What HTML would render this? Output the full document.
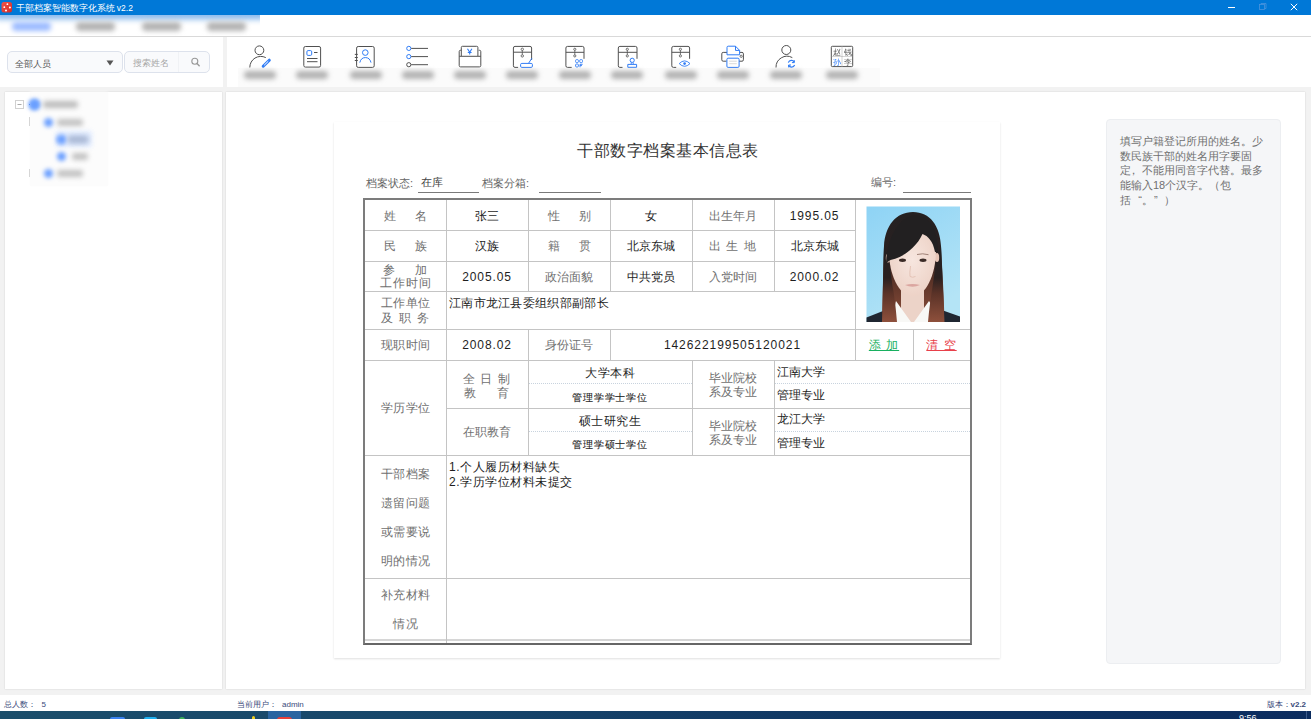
<!DOCTYPE html>
<html><head><meta charset="utf-8"><style>
*{box-sizing:border-box;margin:0;padding:0}
html,body{width:1311px;height:719px;overflow:hidden;background:#f2f2f2;font-family:"Liberation Sans",sans-serif;color:#333}
.a{position:absolute}
.c{position:absolute;padding-top:2px;display:flex;align-items:center;justify-content:center;text-align:center;white-space:nowrap}
.lb{color:#707070;font-size:12px;line-height:15px}
.vl{color:#1e1e1e;font-size:12px;line-height:15px}
.hl{position:absolute;height:1px;background:#c4c4c4}
.vln{position:absolute;width:1px;background:#c4c4c4}
.dot{position:absolute;height:1px;background-image:linear-gradient(90deg,#c8d3de 50%,transparent 50%);background-size:2px 1px}
.blur{filter:blur(2px)}
</style></head><body>
<div class="a" style="left:0px;top:0px;width:1311px;height:15px;background:#0078d7"></div>
<div class="a" style="left:0px;top:15px;width:1311px;height:21px;background:#fff"></div>
<div class="a" style="left:0px;top:36px;width:1311px;height:1px;background:#d9d9d9"></div>
<div class="a" style="left:0px;top:37px;width:223px;height:50px;background:#fff"></div>
<div class="a" style="left:227px;top:37px;width:1084px;height:50px;background:#fff"></div>
<div class="a" style="left:5px;top:92px;width:217px;height:597px;background:#fff;box-shadow:0 0 1.5px rgba(0,0,0,.16)"></div>
<div class="a" style="left:226px;top:92px;width:1079px;height:597px;background:#fff;box-shadow:0 0 1.5px rgba(0,0,0,.16)"></div>
<div class="a" style="left:0px;top:695px;width:1311px;height:16px;background:#fff"></div>
<div class="a" style="left:0px;top:711px;width:1311px;height:8px;background:linear-gradient(90deg,#1b4e6b 0%,#17476b 30%,#0f3563 70%,#0b2c5f 100%)"></div>
<svg class="a" style="left:0;top:0" width="1311" height="90" viewBox="0 0 1311 90">
<defs>
<linearGradient id="appg" x1="0" y1="0" x2="1" y2="1"><stop offset="0" stop-color="#f0544a"/><stop offset="1" stop-color="#d42a26"/></linearGradient>
</defs>
<rect x="1.5" y="2" width="10.5" height="10.5" rx="2.5" fill="url(#appg)"/>
<circle cx="7.4" cy="4.2" r="0.9" fill="#fff"/><circle cx="9.9" cy="7.4" r="1" fill="#fff"/><circle cx="4.3" cy="7.2" r="0.9" fill="#fff"/><circle cx="6" cy="10.4" r="1" fill="#fff"/>
<line x1="1228" y1="7.5" x2="1235" y2="7.5" stroke="#fff" stroke-width="1"/>
<rect x="1259.5" y="4.5" width="5" height="5" fill="none" stroke="#4a94de" stroke-width="0.8"/>
<path d="M1261 4.5V3.5h5v5h-1.5" fill="none" stroke="#4a94de" stroke-width="0.8"/>
<path d="M1290.8 3.8L1297.2 10.2M1297.2 3.8L1290.8 10.2" stroke="#fff" stroke-width="1"/>
</svg>
<div class="a " style="left:15.5px;top:1.8px;white-space:nowrap;font-size:8.5px;line-height:12px;color:#fff">干部档案智能数字化系统 v2.2</div>
<div class="a" style="left:0;top:15px;width:260px;height:21px;overflow:hidden;background:#fff">
<div class="a" style="left:-5px;top:-5px;width:270px;height:9px;background:#7fb2ea;filter:blur(3px)"></div>
<div class="a" style="left:12px;top:7px;width:39px;height:9px;background:#9dbcff;border-radius:4px;filter:blur(2.8px)"></div>
<div class="a" style="left:76px;top:7px;width:39px;height:9px;background:#b4b4b4;border-radius:4px;filter:blur(2.8px)"></div>
<div class="a" style="left:142px;top:7px;width:39px;height:9px;background:#b4b4b4;border-radius:4px;filter:blur(2.8px)"></div>
<div class="a" style="left:207px;top:7px;width:39px;height:9px;background:#b4b4b4;border-radius:4px;filter:blur(2.8px)"></div>
</div>
<div class="a" style="left:7px;top:51px;width:116px;height:22px;background:#f9fafc;border:1px solid #dde2ec;border-radius:5px"></div>
<div class="a " style="left:15px;top:56.5px;white-space:nowrap;font-size:9px;line-height:14px;color:#555">全部人员</div>
<svg class="a" style="left:105px;top:59px" width="10" height="8"><path d="M1.5 1.5H8.5L5 6.5Z" fill="#555"/></svg>
<div class="a" style="left:124px;top:51px;width:86px;height:22px;background:#f9fafc;border:1px solid #dde2ec;border-radius:5px"></div>
<div class="a" style="left:178px;top:52px;width:1px;height:20px;background:#f0f2f5"></div>
<div class="a " style="left:133px;top:56px;white-space:nowrap;font-size:8.6px;line-height:14px;color:#a8a8a8">搜索姓名</div>
<svg class="a" style="left:188px;top:55px" width="16" height="14"><circle cx="6.8" cy="6.3" r="3" fill="none" stroke="#999" stroke-width="1.1"/><path d="M9 8.6L11.2 10.8" stroke="#999" stroke-width="1.4" stroke-linecap="round"/></svg>
<svg class="a" style="left:0;top:0" width="1311" height="90" viewBox="0 0 1311 90" fill="none" stroke-width="1">
<!-- label band -->
<rect x="238" y="68" width="642" height="19" fill="#fbfbfb"/>
<!-- 1 person edit -->
<circle cx="259.4" cy="50.3" r="4.4" stroke="#505050"/>
<path d="M249.8 67.5A11 11 0 0 1 265.8 57.6" stroke="#505050"/>
<path d="M263.2 66.2L269.3 60.2" stroke="#2f7cf6" stroke-width="3" stroke-linecap="round"/>
<path d="M264.2 65.2L268.3 61.2" stroke="#fff" stroke-width="1"/>
<!-- 2 document -->
<rect x="303.8" y="46.5" width="16.8" height="20.6" rx="1.6" stroke="#505050"/>
<rect x="306.9" y="50.6" width="4.8" height="4.8" rx="1.2" stroke="#2f7cf6"/>
<path d="M314 52.5H317.5M307 58.5H317.5M307 61.7H317.5" stroke="#505050"/>
<!-- 3 contact book -->
<rect x="356.6" y="46.5" width="17.6" height="20.9" rx="1.6" stroke="#505050"/>
<path d="M354.8 54.4H357.8M354.8 57.5H357.8M354.8 60.5H357.8" stroke="#505050"/>
<circle cx="365.3" cy="52.6" r="2.8" stroke="#2f7cf6"/>
<path d="M359.8 62.6A5.8 6.8 0 0 1 371 62.6" stroke="#2f7cf6"/>
<!-- 4 list -->
<circle cx="408.8" cy="48.4" r="2.1" stroke="#2f7cf6"/>
<circle cx="408.8" cy="56.6" r="2.1" stroke="#2f7cf6"/>
<circle cx="408.8" cy="64.7" r="2.1" stroke="#505050"/>
<path d="M411.2 48.4H428M411.2 56.6H428M411.2 64.7H428" stroke="#505050"/>
<!-- 5 money box -->
<path d="M461.3 56V47.5a1.2 1.2 0 0 1 1.2-1.2h14.2a1.2 1.2 0 0 1 1.2 1.2V56" stroke="#505050"/>
<path d="M461.3 50.3h-0.8a1.3 1.3 0 0 0-1.3 1.3V65.5a1.4 1.4 0 0 0 1.4 1.4h18.8a1.4 1.4 0 0 0 1.4-1.4V51.6a1.3 1.3 0 0 0-1.3-1.3h-0.8" stroke="#505050"/>
<path d="M459.3 56.3H480.8" stroke="#505050"/>
<path d="M467.5 48.8L469.7 52.2L471.9 48.8M469.7 52.2V54.5M467.8 52.5H471.6" stroke="#2f7cf6" stroke-width="1.1"/>
<!-- 6 archive + pen -->
<path d="M518.1 67.4H515a1.6 1.6 0 0 1-1.6-1.6V48a1.6 1.6 0 0 1 1.6-1.6h15a1.6 1.6 0 0 1 1.6 1.6V60" stroke="#505050"/>
<path d="M513.4 52.2H531.6" stroke="#505050"/>
<circle cx="522.3" cy="49.3" r="1.2" stroke="#505050" stroke-width="0.8"/>
<path d="M522.3 50.5V54.7" stroke="#505050" stroke-width="0.8"/>
<circle cx="522.3" cy="55.9" r="1.2" stroke="#505050" stroke-width="0.8"/>
<rect x="520.6" y="63.4" width="11.8" height="4" rx="1.2" stroke="#2f7cf6"/>
<path d="M528.6 63.2L531.9 58.2" stroke="#2f7cf6"/>

<path d="M571.7 67.4H567.5a1.6 1.6 0 0 1-1.6-1.6V48a1.6 1.6 0 0 1 1.6-1.6H582.4a1.6 1.6 0 0 1 1.6 1.6V58.8" stroke="#505050"/>
<path d="M565.9 52.3H584" stroke="#505050"/>
<circle cx="574.8" cy="49.3" r="1.1" stroke="#505050" stroke-width="0.8"/>
<path d="M574.8 50.4V54.8" stroke="#505050" stroke-width="0.8"/>
<circle cx="574.8" cy="55.9" r="1.1" stroke="#505050" stroke-width="0.8"/>
<rect x="575.6" y="59.6" width="2.8" height="3" rx="1" stroke="#2f7cf6" stroke-width="0.9"/>
<rect x="579.7" y="59.6" width="2.8" height="3" rx="1" stroke="#2f7cf6" stroke-width="0.9"/>
<rect x="575.6" y="64" width="2.8" height="3" rx="1" stroke="#2f7cf6" stroke-width="0.9"/>
<path d="M580 67.3V64.3H582.6M580 65.6H582" stroke="#2f7cf6" stroke-width="0.9"/>
<path d="M622.5 67.4H619.9a1.6 1.6 0 0 1-1.6-1.6V48a1.6 1.6 0 0 1 1.6-1.6H635.4a1.6 1.6 0 0 1 1.6 1.6V58.8" stroke="#505050"/>
<path d="M618.3 52.3H637" stroke="#505050"/>
<circle cx="627.3" cy="49.3" r="1.1" stroke="#505050" stroke-width="0.8"/>
<path d="M627.3 50.4V54.8" stroke="#505050" stroke-width="0.8"/>
<circle cx="627.3" cy="55.9" r="1.1" stroke="#505050" stroke-width="0.8"/>
<circle cx="632.2" cy="60.3" r="2.1" stroke="#2f7cf6"/>
<path d="M631.2 62.4V64.2M633.2 62.4V64.2" stroke="#2f7cf6" stroke-width="0.9"/>
<path d="M627.8 64.4H636.6V67.3H627.8Z" stroke="#2f7cf6"/>
<path d="M676.2 67.4H673.4a1.6 1.6 0 0 1-1.6-1.6V48a1.6 1.6 0 0 1 1.6-1.6H688.0a1.6 1.6 0 0 1 1.6 1.6V58.8" stroke="#505050"/>
<path d="M671.8 52.3H689.6" stroke="#505050"/>
<circle cx="680.4" cy="49.3" r="1.1" stroke="#505050" stroke-width="0.8"/>
<path d="M680.4 50.4V54.8" stroke="#505050" stroke-width="0.8"/>
<circle cx="680.4" cy="55.9" r="1.1" stroke="#505050" stroke-width="0.8"/>
<path d="M679.2 63.6Q684.6 58.2 690 63.6Q684.6 69 679.2 63.6Z" stroke="#2f7cf6" stroke-width="0.9"/>
<circle cx="684.6" cy="63.6" r="1.3" fill="#2f7cf6" stroke="none"/>

<!-- 10 printer -->
<path d="M726.5 61.2H723.2a1.4 1.4 0 0 1-1.4-1.4V53.8a1.4 1.4 0 0 1 1.4-1.4H742a1.4 1.4 0 0 1 1.4 1.4V59.8a1.4 1.4 0 0 1-1.4 1.4H739" stroke="#505050"/>
<circle cx="741.2" cy="56.3" r="1.1" stroke="#505050" stroke-width="0.8"/>
<path d="M727 54.8V47.4a1.2 1.2 0 0 1 1.2-1.2H735.5L739.6 50.4V54.8Z" fill="#fff" stroke="#2f7cf6"/>
<path d="M735.5 46.2V50.4H739.6" stroke="#2f7cf6"/>
<rect x="726.9" y="58.2" width="12.2" height="9.2" rx="1.2" fill="#fff" stroke="#2f7cf6"/>
<path d="M729.2 61.2H736.8M729.2 63.7H736.8" stroke="#c8c8c8" stroke-width="0.7"/>
<!-- 11 person refresh -->
<circle cx="786.3" cy="50" r="4.5" stroke="#505050"/>
<path d="M776 67.5A11 11 0 0 1 792.3 57.6" stroke="#505050"/>
<path d="M788.3 62.6A3.3 3.3 0 0 1 794.3 62.2M794.6 65A3.3 3.3 0 0 1 788.6 65.4" stroke="#2f7cf6" stroke-width="1.2"/>
<path d="M794.3 60.2V62.6H791.9M788.6 67.4V65H791" stroke="#2f7cf6" stroke-width="1"/>
<!-- 12 grid -->
<rect x="831.3" y="46.3" width="21.4" height="20.3" rx="1" stroke="#505050"/>
<path d="M842 46.5V66.5" stroke="#c8c8c8" stroke-width="0.8"/><path d="M831.5 56.5H852.5" stroke="#888" stroke-width="0.7" stroke-dasharray="1 1"/>
</svg>
<div class="a" style="left:833px;top:47.6px;width:32px;height:32px;font-size:32px;line-height:32px;color:#555;transform:scale(0.25);transform-origin:0 0">赵</div>
<div class="a" style="left:843.6px;top:47.6px;width:32px;height:32px;font-size:32px;line-height:32px;color:#555;transform:scale(0.25);transform-origin:0 0">钱</div>
<div class="a" style="left:833px;top:57.6px;width:32px;height:32px;font-size:32px;line-height:32px;color:#2f7cf6;transform:scale(0.25);transform-origin:0 0">孙</div>
<div class="a" style="left:843.6px;top:57.6px;width:32px;height:32px;font-size:32px;line-height:32px;color:#555;transform:scale(0.25);transform-origin:0 0">李</div>
<div class="a" style="left:243.5px;top:71px;width:32px;height:8px;background:#b2b2b2;border-radius:4px;filter:blur(2.8px)"></div>
<div class="a" style="left:296px;top:71px;width:32px;height:8px;background:#b2b2b2;border-radius:4px;filter:blur(2.8px)"></div>
<div class="a" style="left:349.5px;top:71px;width:32px;height:8px;background:#b2b2b2;border-radius:4px;filter:blur(2.8px)"></div>
<div class="a" style="left:401.5px;top:71px;width:32px;height:8px;background:#b2b2b2;border-radius:4px;filter:blur(2.8px)"></div>
<div class="a" style="left:454px;top:71px;width:32px;height:8px;background:#b2b2b2;border-radius:4px;filter:blur(2.8px)"></div>
<div class="a" style="left:506px;top:71px;width:32px;height:8px;background:#b2b2b2;border-radius:4px;filter:blur(2.8px)"></div>
<div class="a" style="left:558.8px;top:71px;width:32px;height:8px;background:#b2b2b2;border-radius:4px;filter:blur(2.8px)"></div>
<div class="a" style="left:611.3px;top:71px;width:32px;height:8px;background:#b2b2b2;border-radius:4px;filter:blur(2.8px)"></div>
<div class="a" style="left:664.5px;top:71px;width:32px;height:8px;background:#b2b2b2;border-radius:4px;filter:blur(2.8px)"></div>
<div class="a" style="left:716.5px;top:71px;width:32px;height:8px;background:#b2b2b2;border-radius:4px;filter:blur(2.8px)"></div>
<div class="a" style="left:770px;top:71px;width:32px;height:8px;background:#b2b2b2;border-radius:4px;filter:blur(2.8px)"></div>
<div class="a" style="left:826px;top:71px;width:32px;height:8px;background:#b2b2b2;border-radius:4px;filter:blur(2.8px)"></div>
<div class="a" style="left:30px;top:92px;width:78px;height:94px;background:#fcfcfc;box-shadow:0 0 3px #fcfcfc"></div>
<svg class="a" style="left:15px;top:100px" width="10" height="10"><rect x="0.5" y="0.5" width="8" height="8" fill="#fff" stroke="#d0d0d0"/><path d="M2.5 4.5H6.5" stroke="#aaa"/></svg>
<div class="a" style="left:29px;top:117px;width:1px;height:9px;border-left:1px solid #d6d6d6"></div>
<div class="a" style="left:29px;top:169px;width:1px;height:8px;border-left:1px solid #d6d6d6"></div>
<div class="a" style="left:29px;top:104px;width:1px;height:1px;background:#2a6ef0"></div>
<div class="a" style="left:29px;top:99px;width:11px;height:11px;border-radius:50%;background:#6aa2ff;filter:blur(2px)"></div>
<div class="a" style="left:30.0px;top:100.0px;width:9px;height:9px;border-radius:50%;background:#6b9fff;filter:blur(2px)"></div>
<div class="a" style="left:43px;top:101.0px;width:35px;height:7px;border-radius:3px;background:#bcbcbc;filter:blur(2.8px)"></div>
<div class="a" style="left:43.5px;top:118.0px;width:9px;height:9px;border-radius:50%;background:#6b9fff;filter:blur(2px)"></div>
<div class="a" style="left:57px;top:119.0px;width:26px;height:7px;border-radius:3px;background:#c2c2c2;filter:blur(2.8px)"></div>
<div class="a" style="left:56.5px;top:135.0px;width:9px;height:9px;border-radius:50%;background:#6b9fff;filter:blur(2px)"></div>
<div class="a" style="left:68px;top:136.0px;width:20px;height:7px;border-radius:3px;background:#aab8d4;filter:blur(2.8px)"></div>
<div class="a" style="left:56.5px;top:152.0px;width:9px;height:9px;border-radius:50%;background:#6b9fff;filter:blur(2px)"></div>
<div class="a" style="left:72px;top:153.0px;width:16px;height:7px;border-radius:3px;background:#c2c2c2;filter:blur(2.8px)"></div>
<div class="a" style="left:43.5px;top:168.5px;width:9px;height:9px;border-radius:50%;background:#6b9fff;filter:blur(2px)"></div>
<div class="a" style="left:57px;top:169.5px;width:26px;height:7px;border-radius:3px;background:#c2c2c2;filter:blur(2.8px)"></div>
<div class="a" style="left:56px;top:131px;width:36px;height:16px;background:#dbe8ff;filter:blur(2.5px);opacity:.8"></div>
<div class="a" style="left:56.5px;top:135.0px;width:9px;height:9px;border-radius:50%;background:#6b9fff;filter:blur(2px)"></div>
<div class="a" style="left:68px;top:136.0px;width:20px;height:7px;border-radius:3px;background:#aab8d4;filter:blur(2.8px)"></div>
<div class="a" style="left:334px;top:122px;width:666px;height:536px;background:#fff;box-shadow:0 1px 2px rgba(0,0,0,.13)"></div>
<div class="a " style="left:577px;top:141px;white-space:nowrap;font-size:16px;line-height:20px;color:#333;letter-spacing:0.5px">干部数字档案基本信息表</div>
<div class="a " style="left:366px;top:176px;white-space:nowrap;font-size:11px;line-height:14px;color:#666">档案状态:</div>
<div class="a " style="left:421px;top:175px;white-space:nowrap;font-size:11px;line-height:14px;color:#444">在库</div>
<div class="hl" style="left:418px;top:192px;width:61px;height:1px;background:#7a7a7a"></div>
<div class="a " style="left:482px;top:176px;white-space:nowrap;font-size:11px;line-height:14px;color:#666">档案分箱:</div>
<div class="hl" style="left:539px;top:192px;width:62px;height:1px;background:#7a7a7a"></div>
<div class="a " style="left:871px;top:175px;white-space:nowrap;font-size:11px;line-height:14px;color:#666">编号:</div>
<div class="hl" style="left:903px;top:192px;width:68px;height:1px;background:#7a7a7a"></div>
<div class="a" style="left:363px;top:198px;width:609px;height:447px;border:2px solid #7c7c7c;border-bottom-color:#666"></div>
<div class="hl" style="left:365px;top:230px;width:490px;height:1px"></div>
<div class="hl" style="left:365px;top:261px;width:490px;height:1px"></div>
<div class="hl" style="left:365px;top:291px;width:490px;height:1px"></div>
<div class="hl" style="left:365px;top:329px;width:605px;height:1px"></div>
<div class="hl" style="left:365px;top:360px;width:605px;height:1px"></div>
<div class="hl" style="left:446px;top:408px;width:524px;height:1px"></div>
<div class="hl" style="left:365px;top:455px;width:605px;height:1px"></div>
<div class="hl" style="left:365px;top:578px;width:605px;height:1px"></div>
<div class="hl" style="left:365px;top:639px;width:605px;height:2px;background:#d6d6d6"></div>
<div class="vln" style="left:528px;top:200px;height:91px;width:1px"></div>
<div class="vln" style="left:610px;top:200px;height:91px;width:1px"></div>
<div class="vln" style="left:692px;top:200px;height:91px;width:1px"></div>
<div class="vln" style="left:774px;top:200px;height:91px;width:1px"></div>
<div class="vln" style="left:446px;top:200px;height:443px;width:1px"></div>
<div class="vln" style="left:855px;top:200px;height:160px;width:1px"></div>
<div class="vln" style="left:528px;top:329px;height:126px;width:1px"></div>
<div class="vln" style="left:610px;top:329px;height:31px;width:1px"></div>
<div class="vln" style="left:913px;top:329px;height:31px;width:1px"></div>
<div class="vln" style="left:692px;top:360px;height:95px;width:1px"></div>
<div class="vln" style="left:774px;top:360px;height:95px;width:1px"></div>
<div class="dot" style="left:529px;top:383px;width:163px"></div>
<div class="dot" style="left:529px;top:431px;width:163px"></div>
<div class="dot" style="left:775px;top:383px;width:195px"></div>
<div class="dot" style="left:775px;top:431px;width:195px"></div>
<div class="c lb" style="left:365px;top:200px;width:81px;height:30px;">姓<span style='display:inline-block;width:19px'></span>名</div>
<div class="c vl" style="left:446px;top:200px;width:82px;height:30px;">张三</div>
<div class="c lb" style="left:528px;top:200px;width:82px;height:30px;">性<span style='display:inline-block;width:19px'></span>别</div>
<div class="c vl" style="left:610px;top:200px;width:82px;height:30px;">女</div>
<div class="c lb" style="left:692px;top:200px;width:82px;height:30px;letter-spacing:0.25px">出生年月</div>
<div class="c vl" style="left:774px;top:200px;width:81px;height:30px;letter-spacing:0.9px">1995.05</div>
<div class="c lb" style="left:365px;top:230px;width:81px;height:31px;">民<span style='display:inline-block;width:19px'></span>族</div>
<div class="c vl" style="left:446px;top:230px;width:82px;height:31px;">汉族</div>
<div class="c lb" style="left:528px;top:230px;width:82px;height:31px;">籍<span style='display:inline-block;width:19px'></span>贯</div>
<div class="c vl" style="left:610px;top:230px;width:82px;height:31px;">北京东城</div>
<div class="c lb" style="left:692px;top:230px;width:82px;height:31px;letter-spacing:1px">出 生 地</div>
<div class="c vl" style="left:774px;top:230px;width:81px;height:31px;">北京东城</div>
<div class="c lb" style="left:365px;top:261px;width:81px;height:30px;letter-spacing:1px;line-height:13px"><div>参<span style='display:inline-block;width:19px'></span>加<br>工作时间</div></div>
<div class="c vl" style="left:446px;top:261px;width:82px;height:30px;letter-spacing:0.9px">2005.05</div>
<div class="c lb" style="left:528px;top:261px;width:82px;height:30px;letter-spacing:0.25px">政治面貌</div>
<div class="c vl" style="left:610px;top:261px;width:82px;height:30px;">中共党员</div>
<div class="c lb" style="left:692px;top:261px;width:82px;height:30px;letter-spacing:0.25px">入党时间</div>
<div class="c vl" style="left:774px;top:261px;width:81px;height:30px;letter-spacing:0.9px">2000.02</div>
<div class="c lb" style="left:365px;top:291px;width:81px;height:38px;letter-spacing:0.25px;line-height:15px"><div>工作单位<br><span style='letter-spacing:1.2px'>及 职 务</span></div></div>
<div class="a vl" style="left:449px;top:296px;white-space:nowrap;letter-spacing:0.3px">江南市龙江县委组织部副部长</div>
<div class="c lb" style="left:365px;top:329px;width:81px;height:31px;letter-spacing:0.25px">现职时间</div>
<div class="c vl" style="left:446px;top:329px;width:82px;height:31px;letter-spacing:0.9px">2008.02</div>
<div class="c lb" style="left:528px;top:329px;width:82px;height:31px;letter-spacing:0.25px">身份证号</div>
<div class="c vl" style="left:610px;top:329px;width:245px;height:31px;letter-spacing:0.95px">142622199505120021</div>
<div class="c lb" style="left:855px;top:329px;width:58px;height:31px;color:#18b060;letter-spacing:1px"><u>添 加</u></div>
<div class="c lb" style="left:913px;top:329px;width:57px;height:31px;color:#e8404a;letter-spacing:1px"><u>清 空</u></div>
<div class="c lb" style="left:365px;top:360px;width:81px;height:95px;letter-spacing:0.25px">学历学位</div>
<div class="c lb" style="left:446px;top:360px;width:82px;height:48px;letter-spacing:1px;line-height:14px"><div style='padding-top:1px'>全 日 制<br>教<span style='display:inline-block;width:20px'></span>育</div></div>
<div class="c vl" style="left:528px;top:360px;width:164px;height:23px;letter-spacing:0.5px;padding-top:3.5px">大学本科</div>
<div class="c vl" style="left:528px;top:384px;width:164px;height:24px;font-size:10px;letter-spacing:0.8px;-webkit-text-stroke:0.1px #1e1e1e">管理学学士学位</div>
<div class="c lb" style="left:692px;top:360px;width:82px;height:48px;letter-spacing:0.25px;line-height:14px"><div>毕业院校<br>系及专业</div></div>
<div class="a vl" style="left:777px;top:365px;white-space:nowrap;">江南大学</div>
<div class="a vl" style="left:777px;top:388px;white-space:nowrap;">管理专业</div>
<div class="c lb" style="left:446px;top:408px;width:82px;height:47px;letter-spacing:0.25px">在职教育</div>
<div class="c vl" style="left:528px;top:408px;width:164px;height:23px;letter-spacing:0.5px;padding-top:3px">硕士研究生</div>
<div class="c vl" style="left:528px;top:432px;width:164px;height:23px;font-size:10px;letter-spacing:0.8px;-webkit-text-stroke:0.1px #1e1e1e">管理学硕士学位</div>
<div class="c lb" style="left:692px;top:408px;width:82px;height:47px;letter-spacing:0.25px;line-height:14px"><div>毕业院校<br>系及专业</div></div>
<div class="a vl" style="left:777px;top:412px;white-space:nowrap;">龙江大学</div>
<div class="a vl" style="left:777px;top:436px;white-space:nowrap;">管理专业</div>
<div class="c lb" style="left:365px;top:455px;width:81px;height:123px;letter-spacing:0.5px;line-height:29px"><div>干部档案<br>遗留问题<br>或需要说<br>明的情况</div></div>
<div class="a vl" style="left:449px;top:460px;white-space:nowrap;letter-spacing:0.5px;line-height:15px">1.个人履历材料缺失<br>2.学历学位材料未提交</div>
<div class="c lb" style="left:365px;top:578px;width:81px;height:61px;letter-spacing:0.5px;line-height:29px"><div>补充材料<br>情况</div></div>
<svg class="a" style="left:866px;top:206px;filter:blur(0.35px)" width="94" height="116" viewBox="0 0 94 116">
<defs>
<linearGradient id="bg" x1="0" y1="0" x2="0.5" y2="1"><stop offset="0" stop-color="#8ed3f5"/><stop offset="1" stop-color="#b4e4f6"/></linearGradient>
<linearGradient id="hairg" x1="0" y1="0" x2="0" y2="1"><stop offset="0" stop-color="#242122"/><stop offset="0.42" stop-color="#2a2020"/><stop offset="0.62" stop-color="#5a3227"/><stop offset="1" stop-color="#8e503c"/></linearGradient>
<radialGradient id="skin" cx="0.5" cy="0.45" r="0.62"><stop offset="0" stop-color="#f7e6df"/><stop offset="1" stop-color="#ecd0c4"/></radialGradient>
</defs>
<rect x="0.5" y="0.5" width="93.5" height="115.5" fill="url(#bg)"/>
<path d="M47 6C30 6 19 20 18 40C17 60 17 90 16 116H78.5C78 90 76 60 75 40C74 20 64 6 47 6Z" fill="url(#hairg)"/>
<path d="M35 80H58V116H35Z" fill="#ecd3c8"/>
<path d="M25 116L30 95L45 116Z" fill="#f8f8f6"/>
<path d="M48 116L63 95L77 116Z" fill="#f8f8f6"/>
<path d="M0.5 116V111.5L17 105L19 116Z" fill="#1f2631"/>
<path d="M94 116V110.5L77 104.5L75 116Z" fill="#1f2631"/>
<path d="M18 40L16 116H31C30 104 29 94 26.5 80L22.5 50Z" fill="url(#hairg)"/>
<path d="M75 40L78.5 116H62C63 104 65 90 67.5 74L71 48Z" fill="url(#hairg)"/>
<ellipse cx="22" cy="52" rx="2.2" ry="4.5" fill="#e6c4b6"/>
<ellipse cx="71" cy="51.5" rx="2.2" ry="4.5" fill="#e6c4b6"/>
<path d="M23 44C22.5 66 32 90 46.5 90.5C61 90 70.5 66 70 42C67 30 58 24 47 24C36 24 23.5 30 23 44Z" fill="url(#skin)"/>
<path d="M20 57C20.5 35 32 11 48 9.5C62 9.5 71.5 20 72 46L69 46C67 35 62 30 56.5 28C51 40 39 51 24.5 54Z" fill="#222021"/>
<path d="M51 48.5Q56.5 47 62.5 48.7" stroke="#8a6a5e" stroke-width="0.8" fill="none"/>
<ellipse cx="36.5" cy="54.3" rx="3.5" ry="1.7" fill="#3b2b27"/>
<ellipse cx="57" cy="54.3" rx="3.5" ry="1.7" fill="#3b2b27"/>
<path d="M44.5 60Q43.5 67 44 70.5Q46.5 72 49.5 70.5" stroke="#e0bcae" stroke-width="0.8" fill="none"/>
<path d="M39 79Q46.5 77 54 79Q46.5 82.5 39 79Z" fill="#dba6a0"/>
</svg>
<div class="a" style="left:110px;top:717px;width:15px;height:3px;background:#3b82f0;border-radius:2px 2px 0 0"></div>
<div class="a" style="left:144px;top:717px;width:13px;height:3px;background:#1eb0f0;border-radius:2px 2px 0 0"></div>
<div class="a" style="left:179px;top:717px;width:6px;height:3px;background:#3cb05a;border-radius:3px 3px 0 0"></div>
<div class="a" style="left:252px;top:716px;width:3px;height:4px;background:#f0d020;border-radius:2px 2px 0 0"></div>
<div class="a" style="left:268px;top:711px;width:33px;height:8px;background:#2a64a0"></div>
<div class="a" style="left:277px;top:717px;width:15px;height:3px;background:#e8403a;border-radius:3px 3px 0 0"></div>
<div class="a" style="left:1306px;top:711px;width:1px;height:8px;background:#3a5a8a"></div>
<div class="a " style="left:1239px;top:712.5px;white-space:nowrap;font-size:9px;line-height:10px;color:#fff">9:56</div>
<div class="a" style="left:1106px;top:119px;width:175px;height:545px;background:#f5f6f8;border:1px solid #eceef1;border-radius:4px"></div>
<div class="a " style="left:1120px;top:134px;white-space:nowrap;font-size:11px;line-height:14.7px;color:#707070">填写户籍登记所用的姓名。少<br>数民族干部的姓名用字要固<br>定<span style='display:inline-block;width:11px;text-indent:-3px'>，</span>不能用同音字代替。最多<br>能输入18个汉字。（包<br>括<span style='display:inline-block;width:11px;text-align:right'>“</span>。<span style='display:inline-block;width:11px;text-align:left;padding-left:1px'>”</span>）</div>
<div class="a " style="left:4px;top:699px;white-space:nowrap;font-size:8px;line-height:12px;color:#3a4a7a">总人数：</div>
<div class="a " style="left:41.5px;top:699px;white-space:nowrap;font-size:8px;line-height:12px;color:#3a4a7a">5</div>
<div class="a " style="left:236.5px;top:699px;white-space:nowrap;font-size:8px;line-height:12px;color:#3a4a7a">当前用户：</div>
<div class="a " style="left:282px;top:699px;white-space:nowrap;font-size:8px;line-height:12px;color:#3a4a7a">admin</div>
<div class="a " style="left:1266.5px;top:699px;white-space:nowrap;font-size:8px;line-height:12px;color:#3a4a7a">版本：<b>v2.2</b></div>
</body></html>
